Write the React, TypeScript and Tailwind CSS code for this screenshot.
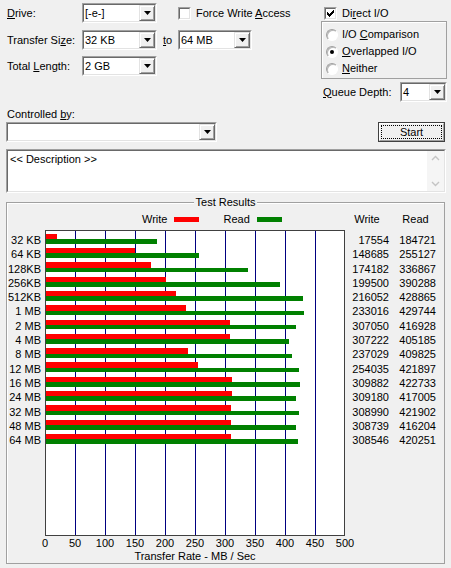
import React from 'react';

type Row = [string, number, number];

const rows: Row[] = [
  ['32 KB', 17554, 184721],
  ['64 KB', 148685, 255127],
  ['128KB', 174182, 336867],
  ['256KB', 199500, 390288],
  ['512KB', 216052, 428865],
  ['1 MB', 233016, 429744],
  ['2 MB', 307050, 416928],
  ['4 MB', 307222, 405185],
  ['8 MB', 237029, 409825],
  ['12 MB', 254035, 421897],
  ['16 MB', 309882, 422733],
  ['24 MB', 309180, 417005],
  ['32 MB', 308990, 421902],
  ['48 MB', 308739, 416204],
  ['64 MB', 308546, 420251],
];

const ticks = [0, 50, 100, 150, 200, 250, 300, 350, 400, 450, 500];

// 300px wide plot = 500 MB/s, values are KB/s
const ROW_H = 14.3;
const scale = (v: number) => v * 0.0006;

const Arrow = () => (
  <svg width="7" height="4" viewBox="0 0 7 4">
    <polygon points="0,0 7,0 3.5,4" fill="#000" />
  </svg>
);

function Sunken({ className = '', children }: { className?: string; children?: React.ReactNode }) {
  return (
    <div className={`border border-t-[#a0a0a0] border-l-[#a0a0a0] border-r-white border-b-white ${className}`}>
      <div className="h-full border border-t-[#696969] border-l-[#696969] border-r-[#e3e3e3] border-b-[#e3e3e3] bg-white">
        {children}
      </div>
    </div>
  );
}

function DropButton() {
  return (
    <div className="flex h-full w-[16px] shrink-0 items-center justify-center border border-t-[#e3e3e3] border-l-[#e3e3e3] border-r-[#696969] border-b-[#696969] bg-[#f0f0f0] shadow-[inset_1px_1px_0_white,inset_-1px_-1px_0_#a0a0a0]">
      <Arrow />
    </div>
  );
}

function Combo({ value, className }: { value: string; className: string }) {
  return (
    <Sunken className={className}>
      <div className="flex h-full items-center">
        <span className="flex-1 whitespace-nowrap pl-[1px]">{value}</span>
        <DropButton />
      </div>
    </Sunken>
  );
}

function Check({ checked = false }: { checked?: boolean }) {
  return (
    <Sunken className="h-[13px] w-[13px] shrink-0">
      <div className="flex h-full items-center justify-center">
        {checked && (
          <svg width="7" height="7" viewBox="0 0 7 7" shapeRendering="crispEdges">
            {[2, 3, 4, 3, 2, 1, 0].map((y, x) => (
              <rect key={x} x={x} y={y} width="1" height="3" fill="#000" />
            ))}
          </svg>
        )}
      </div>
    </Sunken>
  );
}

function Radio({ on = false }: { on?: boolean }) {
  return (
    <div className="flex h-[12px] w-[12px] shrink-0 items-center justify-center rounded-full border border-t-[#a0a0a0] border-l-[#a0a0a0] border-r-white border-b-white bg-white shadow-[inset_1px_1px_0_#b9b9b9]">
      {on && <div className="h-[4px] w-[4px] rounded-full bg-black" />}
    </div>
  );
}

function Chevron({ up }: { up: boolean }) {
  return (
    <svg width="9" height="6" viewBox="0 0 9 6">
      <polyline points={up ? '1,5 4.5,1.5 8,5' : '1,1 4.5,4.5 8,1'} stroke="#c4c4c4" strokeWidth="1.4" fill="none" />
    </svg>
  );
}

function Plot() {
  return (
    <svg width="300" height="306" viewBox="0 0 300 306" shapeRendering="crispEdges" className="block">
      <rect x="0.5" y="0.5" width="299" height="305" fill="#fff" stroke="#404040" />
      {ticks.slice(1, 10).map((t, k) => (
        <line key={t} x1={30 * (k + 1) + 0.5} y1="1" x2={30 * (k + 1) + 0.5} y2="305" stroke="#000080" />
      ))}
      {rows.map(([label, w, r], i) => (
        <g key={label}>
          <rect x="1" y={3.7 + ROW_H * i} width={scale(w)} height="5.4" fill="#ff0000" />
          <rect x="1" y={9.1 + ROW_H * i} width={scale(r)} height="4.5" fill="#008000" />
        </g>
      ))}
    </svg>
  );
}

export default function App() {
  return (
    <div className="flex h-[568px] w-[451px] flex-col overflow-hidden bg-[#f0f0f0] font-['Liberation_Sans',Arial,sans-serif] text-[11px] leading-[13px] text-black">
      {/* top controls */}
      <div className="flex h-[105px]">
        <div className="w-[321px] pl-[7px] pt-[3px]">
          <div className="flex h-[20px] items-center">
            <span className="w-[75px]"><u>D</u>rive:</span>
            <Combo value="[-e-]" className="h-[20px] w-[75px]" />
            <div className="ml-[21px] flex items-center gap-[5px]">
              <Check />
              <span>Force Write <u>A</u>ccess</span>
            </div>
          </div>
          <div className="mt-[7px] flex h-[20px] items-center">
            <span className="w-[75px]">Transfer Si<u>z</u>e:</span>
            <Combo value="32 KB" className="h-[20px] w-[75px]" />
            <span className="w-[21px] pl-[6px]"><u>t</u>o</span>
            <Combo value="64 MB" className="h-[20px] w-[74px]" />
          </div>
          <div className="mt-[6px] flex h-[20px] items-center">
            <span className="w-[75px]">Total <u>L</u>ength:</span>
            <Combo value="2 GB" className="h-[20px] w-[75px]" />
          </div>
        </div>
        <div className="w-[126px] pt-[5px]">
          <div className="flex h-[16px] items-center gap-[5px] pl-[3px]">
            <Check checked />
            <span>Di<u>r</u>ect I/O</span>
          </div>
          <div className="h-[58px] border border-[#a0a0a0] pl-[4px] pt-[4px] shadow-[inset_1px_1px_0_white]">
            <div className="flex h-[17px] items-center gap-[4px]">
              <Radio />
              <span>I/O <u>C</u>omparison</span>
            </div>
            <div className="flex h-[17px] items-center gap-[4px]">
              <Radio on />
              <span><u>O</u>verlapped I/O</span>
            </div>
            <div className="flex h-[17px] items-center gap-[4px]">
              <Radio />
              <span><u>N</u>either</span>
            </div>
          </div>
          <div className="mt-[3px] flex h-[20px] items-center pl-[2px]">
            <span className="w-[77px]"><u>Q</u>ueue Depth:</span>
            <Combo value="4" className="h-[20px] w-[47px]" />
          </div>
        </div>
      </div>

      {/* controlled by / start */}
      <div className="mt-[3px] h-[14px] pl-[7px]">Controlled <u>b</u>y:</div>
      <div className="flex h-[20px] items-center pl-[6px] pr-[6px]">
        <Combo value="" className="h-[20px] w-[211px]" />
        <div className="flex-1" />
        <div className="h-[20px] w-[67px] border border-[#404040] bg-[#f0f0f0]">
          <div className="h-full border border-t-white border-l-white border-r-[#a0a0a0] border-b-[#a0a0a0] p-[1px]">
            <div className="flex h-full items-center justify-center border border-dotted border-black">Start</div>
          </div>
        </div>
      </div>

      {/* description */}
      <Sunken className="ml-[6px] mt-[7px] h-[44px] w-[440px]">
        <div className="flex h-full">
          <div className="flex-1 pl-[2px] pt-[2px]">&lt;&lt; Description &gt;&gt;</div>
          <div className="flex w-[17px] flex-col items-center justify-between bg-[#f5f5f5] py-[4px]">
            <Chevron up />
            <Chevron up={false} />
          </div>
        </div>
      </Sunken>

      {/* test results */}
      <div className="relative ml-[6px] mt-[9px] h-[362px] w-[439px] border border-[#a0a0a0] shadow-[inset_1px_1px_0_white]">
        <span className="absolute left-1/2 top-[-7px] -translate-x-1/2 bg-[#f0f0f0] px-[2px]">Test Results</span>
        <div className="flex">
          <div className="w-[34px]">
            <div className="h-[27px]" />
            <div className="pt-[3px]">
              {rows.map(([label]) => (
                <div key={label} className="h-[14.3px] text-right leading-[14.3px]">{label}</div>
              ))}
            </div>
          </div>
          <div className="ml-[4px] w-[300px]">
            <div className="flex h-[27px] items-start pl-[97px] pt-[10px]">
              <span>Write</span>
              <span className="ml-[7px] mt-[4px] h-[5px] w-[25px] bg-[#ff0000]" />
              <span className="ml-[24px]">Read</span>
              <span className="ml-[7px] mt-[4px] h-[5px] w-[25px] bg-[#008000]" />
            </div>
            <Plot />
            <div className="-ml-[15px] mt-[1px] flex w-[330px]">
              {ticks.map((t) => (
                <span key={t} className="w-[30px] text-center">{t}</span>
              ))}
            </div>
            <div className="text-center">Transfer Rate - MB / Sec</div>
          </div>
          <div className="w-[44px]">
            <div className="h-[27px] pt-[10px] text-center">Write</div>
            <div className="pt-[3px]">
              {rows.map(([label, w]) => (
                <div key={label} className="h-[14.3px] text-right leading-[14.3px]">{w}</div>
              ))}
            </div>
          </div>
          <div className="w-[47px]">
            <div className="h-[27px] pl-[6px] pt-[10px] text-center">Read</div>
            <div className="pt-[3px]">
              {rows.map(([label, , r]) => (
                <div key={label} className="h-[14.3px] text-right leading-[14.3px]">{r}</div>
              ))}
            </div>
          </div>
        </div>
      </div>
    </div>
  );
}
